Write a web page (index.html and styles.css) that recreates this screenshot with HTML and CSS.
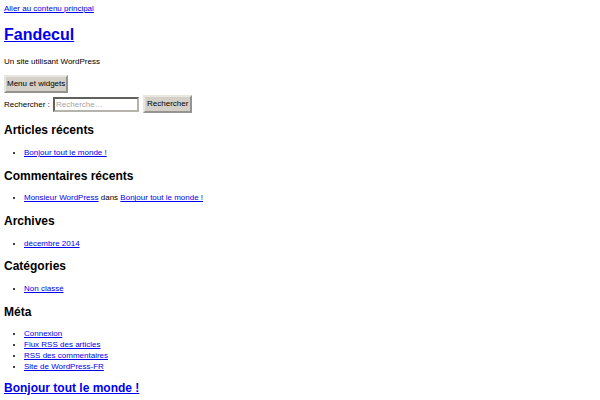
FILE: index.html
```html
<!DOCTYPE html>
<html lang="fr">
<head>
<meta charset="UTF-8">
<title>Fandecul | Un site utilisant WordPress</title>
<link rel="stylesheet" href="styles.css">
</head>
<body>

<a class="skip-link" href="#content">Aller au contenu principal</a>

<header class="site-header">
    <h1 class="site-title"><a href="#">Fandecul</a></h1>
    <p class="site-description">Un site utilisant WordPress</p>
    <button class="menu-toggle">Menu et widgets</button>
</header>

<div class="widget-area">
    <form class="search-form">
        <label>Rechercher : <input type="search" class="search-field" placeholder="Recherche…"></label>
        <input type="submit" class="search-submit" value="Rechercher">
    </form>

    <aside class="widget">
        <h2 class="widget-title">Articles récents</h2>
        <ul>
            <li><a href="#">Bonjour tout le monde !</a></li>
        </ul>
    </aside>

    <aside class="widget">
        <h2 class="widget-title">Commentaires récents</h2>
        <ul>
            <li><a href="#">Monsieur WordPress</a> dans <a href="#">Bonjour tout le monde !</a></li>
        </ul>
    </aside>

    <aside class="widget">
        <h2 class="widget-title">Archives</h2>
        <ul>
            <li><a href="#">décembre 2014</a></li>
        </ul>
    </aside>

    <aside class="widget">
        <h2 class="widget-title">Catégories</h2>
        <ul>
            <li><a href="#">Non classé</a></li>
        </ul>
    </aside>

    <aside class="widget">
        <h2 class="widget-title">Méta</h2>
        <ul>
            <li><a href="#">Connexion</a></li>
            <li><a href="#">Flux RSS des articles</a></li>
            <li><a href="#">RSS des commentaires</a></li>
            <li><a href="#">Site de WordPress-FR</a></li>
        </ul>
    </aside>
</div>

<main id="content" class="site-main">
    <article>
        <h2 class="entry-title"><a href="#">Bonjour tout le monde !</a></h2>
    </article>
</main>

</body>
</html>
```

FILE: styles.css
```css
body {
    margin: 4px;
    font-family: "Liberation Sans", Arial, sans-serif;
    font-size: 8px;
    line-height: 1.3;
    color: #000;
    background: #fff;
}
a {
    color: #0000ee;
}
.skip-link {
    display: inline-block;
}
.site-title {
    font-size: 16px;
    margin: 10.7px 0;
}
.site-description {
    margin: 8px 0;
}
.menu-toggle {
    display: block;
    font-family: inherit;
    font-size: 8px;
    line-height: 1.3;
    padding: 2px 1px;
    background: #d4d0c8;
    color: #000;
    border: 2px outset #e8e6e1;
    margin: 0;
}
.widget-area {
    margin-top: 1.5px;
}
.search-form {
    margin: 0;
    display: flex;
    align-items: center;
    gap: 4px;
}
.search-field {
    font-family: inherit;
    font-size: 8px;
    width: 86px;
    height: 15px;
    padding: 0 1px;
    margin: 0 0 0 1px;
    border: 2px inset #b6b3ad;
}
.search-field::placeholder {
    color: #a5a5a5;
}
.search-submit {
    font-family: inherit;
    font-size: 8px;
    line-height: 1.3;
    padding: 2px 2px;
    margin: 0;
    background: #d4d0c8;
    color: #000;
    border: 2px outset #e8e6e1;
}
.widget-title,
.entry-title {
    font-size: 12px;
    margin: 10px 0 9px;
}
.entry-title {
    margin-top: 8px;
}
.widget ul {
    margin: 8px 0;
    padding-left: 20px;
}
.widget li {
    line-height: 1.35;
}
```
